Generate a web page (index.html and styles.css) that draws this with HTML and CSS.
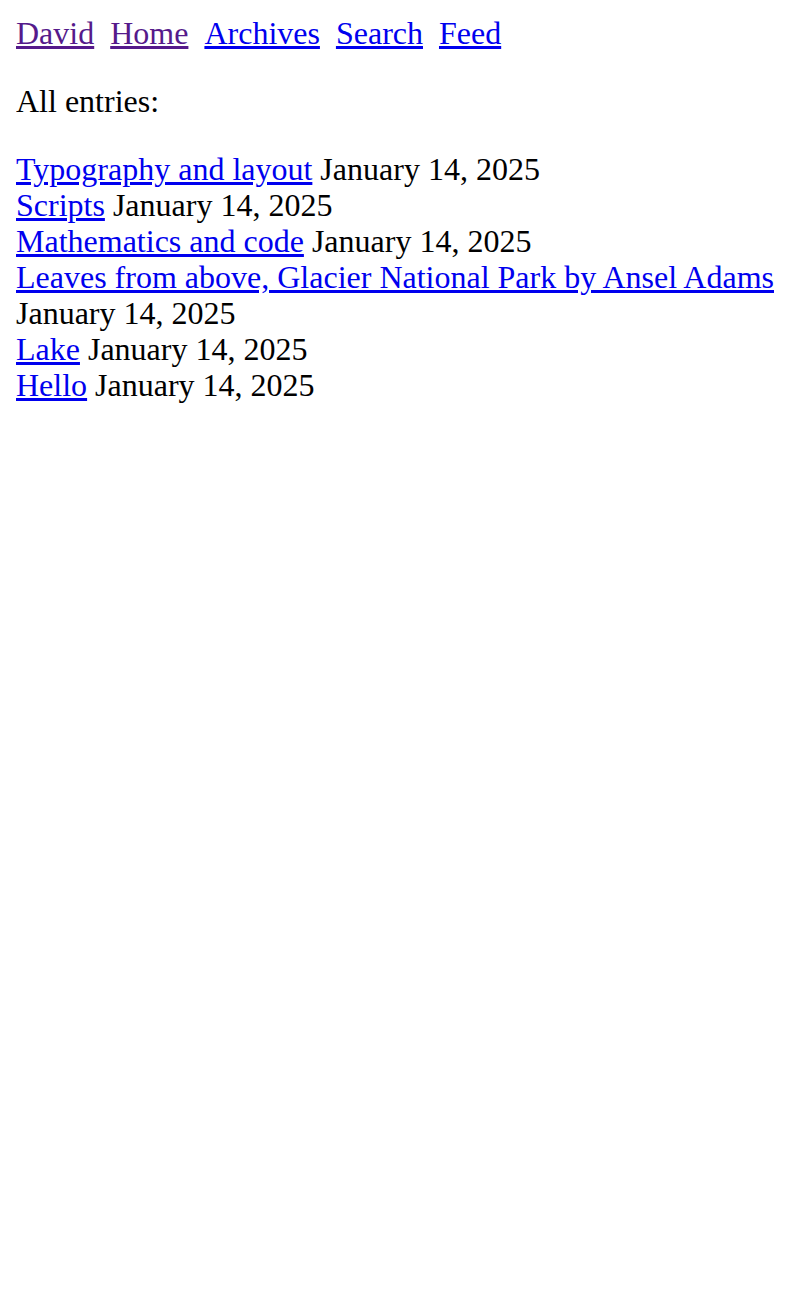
FILE: index.html
```html
<!DOCTYPE html>
<html>
<head>
<meta charset="utf-8">
<title>David</title>
<link rel="stylesheet" href="styles.css">
</head>
<body class="page">
<nav class="nav">
<a class="visited" href="#">David</a>
<a class="visited" href="#">Home</a>
<a class="link" href="#">Archives</a>
<a class="link" href="#">Search</a>
<a class="link" href="#">Feed</a>
</nav>
<p class="intro">All entries:</p>
<div class="entries">
<div class="entry"><a class="link" href="#">Typography and layout</a> January 14, 2025</div>
<div class="entry"><a class="link" href="#">Scripts</a> January 14, 2025</div>
<div class="entry"><a class="link" href="#">Mathematics and code</a> January 14, 2025</div>
<div class="entry"><a class="link" href="#">Leaves from above, Glacier National Park by Ansel Adams</a> January 14, 2025</div>
<div class="entry"><a class="link" href="#">Lake</a> January 14, 2025</div>
<div class="entry"><a class="link" href="#">Hello</a> January 14, 2025</div>
</div>
</body>
</html>
```
FILE: styles.css
```css
html { background: #fff; }
.page {
  margin: 15px 16px 16px;
  font-family: "Liberation Serif", "Times New Roman", serif;
  font-size: 32px;
  line-height: 36px;
  color: #000;
}
.nav {
  display: flex;
  gap: 16px;
  white-space: nowrap;
}
.link { color: #0000ee; text-decoration: underline; }
.visited { color: #551a8b; text-decoration: underline; }
.intro { margin: 32px 0; }
.entries { margin: 0; }
```
